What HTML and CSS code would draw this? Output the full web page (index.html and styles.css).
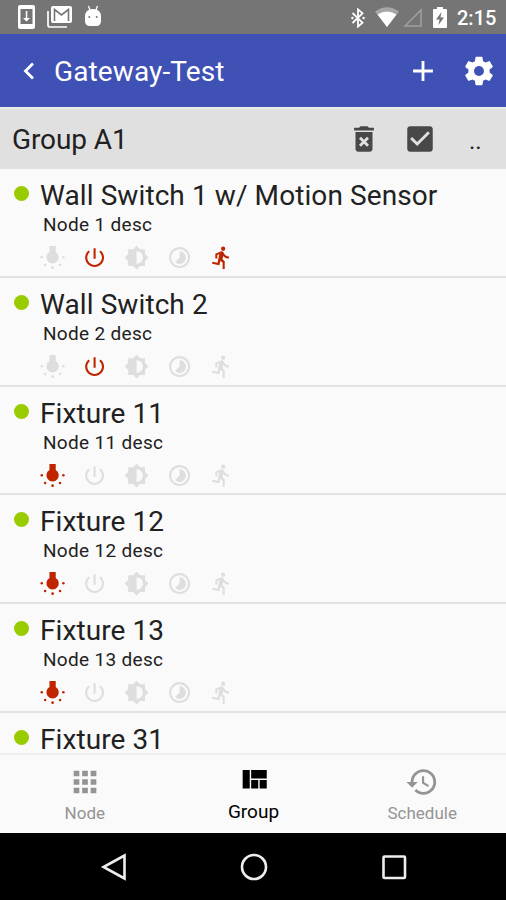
FILE: index.html
```html
<!DOCTYPE html>
<html lang="en">
<head>
<meta charset="utf-8">
<title>Gateway-Test</title>
<link rel="stylesheet" href="styles.css">
</head>
<body>
<svg class="sprite" aria-hidden="true">
  <symbol id="bulb" viewBox="0 0 24 24"><path d="M9 1v5.600a5.900 5.900 0 1 0 6 0V1z"/><circle cx="1.700" cy="11.700" r="1.200"/><circle cx="22.300" cy="11.700" r="1.200"/><circle cx="4.900" cy="19" r="1.200"/><circle cx="19.100" cy="19" r="1.200"/><circle cx="12" cy="21.600" r="1.300"/></symbol>
  <symbol id="power" viewBox="0 0 24 24"><path d="M13 3h-2v10h2V3zm4.830 2.170l-1.420 1.420C17.990 7.860 19 9.810 19 12c0 3.870-3.130 7-7 7s-7-3.130-7-7c0-2.190 1.010-4.140 2.580-5.420L6.170 5.170C4.230 6.820 3 9.260 3 12c0 4.970 4.030 9 9 9s9-4.030 9-9c0-2.740-1.230-5.180-3.170-6.830z"/></symbol>
  <symbol id="dim" viewBox="0 0 24 24"><path d="M20 15.310L23.310 12 20 8.690V4h-4.690L12 .69 8.690 4H4v4.690L.69 12 4 15.310V20h4.690L12 23.310 15.310 20H20v-4.690zM12 18V6c3.310 0 6 2.690 6 6s-2.690 6-6 6z"/></symbol>
  <symbol id="lapse" viewBox="0 0 24 24"><path d="M16.240 7.760C15.070 6.590 13.540 6 12 6v6l-4.240 4.240c2.340 2.340 6.140 2.340 8.490 0 2.340-2.340 2.340-6.140-.01-8.480zM12 2C6.480 2 2 6.480 2 12s4.480 10 10 10 10-4.480 10-10S17.520 2 12 2zm0 18c-4.420 0-8-3.580-8-8s3.580-8 8-8 8 3.580 8 8-3.580 8-8 8z"/></symbol>
  <symbol id="run" viewBox="0 0 24 24"><path d="M13.490 5.480c1.100 0 2-.9 2-2s-.9-2-2-2-2 .9-2 2 .9 2 2 2zm-3.600 13.900l1-4.400 2.100 2v6h2v-7.500l-2.100-2 .6-3c1.300 1.500 3.300 2.500 5.500 2.500v-2c-1.900 0-3.500-1-4.300-2.400l-1-1.600c-.4-.6-1-1-1.700-1-.3 0-.5.1-.8.1l-5.200 2.200v4.700h2v-3.400l1.800-.7-1.600 8.100-4.900-1-.4 2 7 1.400z"/></symbol>
</svg>
<div class="screen">
  <div class="status">
    <svg class="st-download" viewBox="0 0 17 24"><path fill="#fff" fill-rule="evenodd" d="M2 0h13q2 0 2 2v20q0 2-2 2H2q-2 0-2-2V2Q0 0 2 0zM2.500 4v15h12V4z"/><path fill="#fff" d="M7.800 6h1.500v7H12l-3.500 3.500L5 13h2.800z"/></svg>
    <svg class="st-mail" viewBox="0 0 25 22"><path d="M1 5v14q0 2 2 2h17" fill="none" stroke="#fff" stroke-width="1.700"/><rect x="4" width="21" height="17" rx="2" fill="#fff"/><path d="M7.500 15V3.500l7 5.500 7-5.500V15" fill="none" stroke="#757575" stroke-width="1.600"/></svg>
    <svg class="st-droid" viewBox="0 0 18 22"><path d="M4.500 1l1.500 4M13.500 1L12 5" stroke="#fff" stroke-width="1.300"/><path d="M1 12q0-8 8-8t8 8v4q0 5-5 5H6q-5 0-5-5z" fill="#fff"/><circle cx="5.300" cy="12" r="1" fill="#757575"/><circle cx="12.700" cy="12" r="1" fill="#757575"/></svg>
    <div class="status-right">
      <svg class="st-bt" viewBox="0 0 14 20"><path d="M1.500 5l10 9.700L7 18.600V1.400l4.500 3.900L1.500 15" fill="none" stroke="#fff" stroke-width="1.800"/><circle cx="1.400" cy="10" r="1.200" fill="#fff"/><circle cx="12.600" cy="10" r="1.200" fill="#fff"/></svg>
      <svg class="st-wifi" viewBox="0 0 24 20"><path d="M12 20L0 4.500Q12-4 24 4.500z" fill="#a6a6a6"/><path d="M12 20L2.500 7.500Q12 1.500 21.500 7.500z" fill="#fff"/></svg>
      <svg class="st-cell" viewBox="0 0 19 19"><path d="M2 18L18 2v16z" fill="none" stroke="#a0a0a0" stroke-width="1.500"/></svg>
      <svg class="st-battery" viewBox="0 0 14 21"><path d="M4 0h6v2h3q1 0 1 1v17q0 1-1 1H1q-1 0-1-1V3q0-1 1-1h3z" fill="#fff"/><path d="M8.500 5L3 12.500h3.500L5.500 18l5.500-7.500H7.500z" fill="#757575"/></svg>
      <span class="clock">2:15</span>
    </div>
  </div>

  <header class="appbar">
    <svg class="back" viewBox="0 0 12 18"><path d="M10 1.500L2.500 9l7.500 7.500" fill="none" stroke="#fff" stroke-width="2.800"/></svg>
    <h1>Gateway-Test</h1>
    <svg class="icon" viewBox="0 0 24 24"><path d="M19 13h-6v6h-2v-6H5v-2h6V5h2v6h6v2z"/></svg>
    <svg class="icon" viewBox="0 0 24 24"><path d="M19.430 12.980c.04-.32.07-.64.07-.98s-.03-.66-.07-.98l2.110-1.650c.19-.15.24-.42.12-.64l-2-3.460c-.12-.22-.39-.3-.61-.22l-2.490 1c-.52-.4-1.080-.73-1.690-.98l-.38-2.650C14.460 2.180 14.250 2 14 2h-4c-.25 0-.46.18-.49.42l-.38 2.650c-.61.25-1.170.59-1.690.98l-2.490-1c-.23-.09-.49 0-.61.22l-2 3.460c-.13.22-.07.49.12.64l2.110 1.650c-.04.32-.07.65-.07.98s.03.66.07.98l-2.110 1.650c-.19.15-.24.42-.12.64l2 3.460c.12.22.39.3.61.22l2.490-1c.52.4 1.080.73 1.690.98l.38 2.650c.03.24.24.42.49.42h4c.25 0 .46-.18.49-.42l.38-2.650c.61-.25 1.170-.59 1.690-.98l2.490 1c.23.09.49 0 .61-.22l2-3.460c.12-.22.07-.49-.12-.64l-2.110-1.650zM12 15.500c-1.930 0-3.500-1.570-3.500-3.500s1.570-3.500 3.500-3.500 3.500 1.570 3.500 3.500-1.570 3.500-3.500 3.500z"/></svg>
  </header>

  <div class="group">
    <h2>Group A1</h2>
    <svg class="icon" viewBox="0 0 24 24"><path d="M6 19c0 1.100.9 2 2 2h8c1.100 0 2-.9 2-2V7H6v12zm2.460-7.120l1.410-1.410L12 12.590l2.120-2.120 1.410 1.410L13.410 14l2.120 2.120-1.410 1.410L12 15.410l-2.120 2.120-1.410-1.410L10.590 14l-2.130-2.120zM15.500 4l-1-1h-5l-1 1H5v2h14V4z"/></svg>
    <svg class="icon" viewBox="0 0 24 24"><path d="M19 3H5c-1.110 0-2 .9-2 2v14c0 1.100.89 2 2 2h14c1.110 0 2-.9 2-2V5c0-1.100-.89-2-2-2zm-9 14l-5-5 1.410-1.410L10 14.170l7.590-7.590L19 8l-9 9z"/></svg>
    <span class="more">..</span>
  </div>

  <main class="list">
    <section class="row"><i class="dot"></i><div class="info"><h3>Wall Switch 1 w/ Motion Sensor</h3><p>Node 1 desc</p>
      <div class="caps"><svg><use href="#bulb"/></svg><svg class="on"><use href="#power"/></svg><svg><use href="#dim"/></svg><svg><use href="#lapse"/></svg><svg class="on"><use href="#run"/></svg></div></div></section>
    <section class="row"><i class="dot"></i><div class="info"><h3>Wall Switch 2</h3><p>Node 2 desc</p>
      <div class="caps"><svg><use href="#bulb"/></svg><svg class="on"><use href="#power"/></svg><svg><use href="#dim"/></svg><svg><use href="#lapse"/></svg><svg><use href="#run"/></svg></div></div></section>
    <section class="row"><i class="dot"></i><div class="info"><h3>Fixture 11</h3><p>Node 11 desc</p>
      <div class="caps"><svg class="on"><use href="#bulb"/></svg><svg><use href="#power"/></svg><svg><use href="#dim"/></svg><svg><use href="#lapse"/></svg><svg><use href="#run"/></svg></div></div></section>
    <section class="row"><i class="dot"></i><div class="info"><h3>Fixture 12</h3><p>Node 12 desc</p>
      <div class="caps"><svg class="on"><use href="#bulb"/></svg><svg><use href="#power"/></svg><svg><use href="#dim"/></svg><svg><use href="#lapse"/></svg><svg><use href="#run"/></svg></div></div></section>
    <section class="row"><i class="dot"></i><div class="info"><h3>Fixture 13</h3><p>Node 13 desc</p>
      <div class="caps"><svg class="on"><use href="#bulb"/></svg><svg><use href="#power"/></svg><svg><use href="#dim"/></svg><svg><use href="#lapse"/></svg><svg><use href="#run"/></svg></div></div></section>
    <section class="row last"><i class="dot"></i><div class="info"><h3>Fixture 31</h3></div></section>
  </main>

  <nav class="tabs">
    <div class="tab"><svg viewBox="0 0 24 24"><path d="M4 8h4V4H4v4zm6 12h4v-4h-4v4zm-6 0h4v-4H4v4zm0-6h4v-4H4v4zm6 0h4v-4h-4v4zm6-10v4h4V4h-4zm-6 4h4V4h-4v4zm6 6h4v-4h-4v4zm0 6h4v-4h-4v4z"/></svg><span>Node</span></div>
    <div class="tab active"><svg viewBox="0 0 24 24"><path d="M4 5v13h5V5zM10 5v6h11V5zM10 12v6h5v-6zM16 12v6h5v-6z"/></svg><span>Group</span></div>
    <div class="tab"><svg viewBox="0 0 24 24"><path d="M13 3c-4.970 0-9 4.030-9 9H1l3.890 3.890.07.140L9 12H6c0-3.870 3.130-7 7-7s7 3.130 7 7-3.130 7-7 7c-1.930 0-3.680-.79-4.940-2.060l-1.420 1.420C8.270 19.990 10.510 21 13 21c4.970 0 9-4.030 9-9s-4.030-9-9-9zm-1 5v5l4.280 2.540.72-1.210-3.500-2.080V8H12z"/></svg><span>Schedule</span></div>
  </nav>

  <div class="sysnav">
    <svg viewBox="0 0 28 30"><path d="M24.500 3.500v23L3.500 15z"/></svg>
    <svg viewBox="0 0 28 30"><circle cx="14" cy="15" r="12"/></svg>
    <svg viewBox="0 0 28 30"><rect x="3.500" y="4.500" width="21.500" height="21.500" rx="1"/></svg>
  </div>
</div>
</body>
</html>
```
FILE: styles.css
```css
* { box-sizing: border-box; }
body, h1, h2, h3, p { margin: 0; }
body { background: #fafafa; font-family: Roboto, "Liberation Sans", sans-serif; color: #212121; }
h1, h2, h3 { font-weight: 400; white-space: nowrap; }
svg { display: block; flex: none; }
.sprite { position: absolute; width: 0; height: 0; }
.screen { width: 506px; height: 900px; display: flex; flex-direction: column; overflow: hidden; }

.status { height: 34px; flex: none; display: flex; align-items: flex-start; background: #757575; color: #fff; padding-left: 18px; }
.st-download { width: 17px; height: 24px; margin-top: 5px; }
.st-mail { width: 25px; height: 22px; margin: 6px 0 0 12px; }
.st-droid { width: 18px; height: 22px; margin: 5px 0 0 12px; }
.status-right { margin-left: auto; display: flex; padding-right: 10px; }
.st-bt { width: 14px; height: 20px; margin-top: 8px; }
.st-wifi { width: 24px; height: 20px; margin: 7px 0 0 10px; }
.st-cell { width: 19px; height: 19px; margin: 8px 0 0 4px; }
.st-battery { width: 14px; height: 21px; margin: 7px 0 0 11px; }
.clock { width: 39px; margin-left: 10px; font-size: 20px; font-weight: 500; line-height: 36px; }

.appbar { height: 73px; flex: none; display: flex; align-items: center; background: #3f51b5; color: #fff; padding: 0 10px 0 23px; }
.back { width: 12px; height: 18px; }
.appbar h1 { flex: 1; margin-left: 19px; font-size: 28px; line-height: 36px; padding-top: 3px; letter-spacing: 0.12px; }
.icon { width: 34px; height: 34px; fill: currentColor; }
.appbar .icon + .icon { margin-left: 22px; }

.group { height: 62px; flex: none; display: flex; align-items: center; background: #e0e0e0; border-top: 2px solid #eaeaea; padding: 0 24px 0 12px; }
.group h2 { flex: 1; font-size: 28px; line-height: 36px; padding-top: 1px; letter-spacing: -0.1px; }
.group .icon { fill: #484848; }
.group .icon + .icon { margin-left: 22px; }
.more { width: 13px; margin-left: 32px; font-size: 24px; line-height: 36px; padding-top: 3px; }

.list { height: 584px; flex: none; overflow: hidden; }
.row { height: 108.8px; display: flex; align-items: flex-start; border-bottom: 2px solid #e2e2e2; padding-left: 14px; }
.row.last { height: 40px; border-bottom: 0; }
.dot { width: 15px; height: 15px; border-radius: 50%; background: #99cc00; flex: none; margin-top: 17px; }
.info { margin-left: 11px; }
.row h3 { font-size: 28px; line-height: 32px; margin-top: 11px; letter-spacing: 0.09px; }
.row p { font-size: 19px; line-height: 24px; margin: 1px 0 0 3px; letter-spacing: 0.32px; }
.caps { display: flex; gap: 17px; margin-top: 8px; }
.caps svg { width: 25.200px; height: 25.200px; fill: #dedede; }
.caps .on { fill: #bf2600; }

.tabs { height: 80px; flex: none; display: flex; border-top: 2px solid #eeeeee; background: #fafafa; }
.tab { flex: 1; display: flex; flex-direction: column; align-items: center; color: #949494; font-size: 17px; line-height: 22px; padding: 10px 0 0 1px; }
.tab svg { width: 34px; height: 34px; fill: currentColor; }
.tab span { margin-top: 3px; }
.tab.active { color: #000; font-size: 19px; padding-top: 8px; }
.tab.active span { margin-top: 4px; }

.sysnav { height: 67px; flex: none; display: flex; justify-content: center; align-items: center; gap: 112px; background: #000; padding-left: 1px; }
.sysnav svg { width: 28px; height: 30px; fill: none; stroke: #eee; stroke-width: 2.6; }
```
